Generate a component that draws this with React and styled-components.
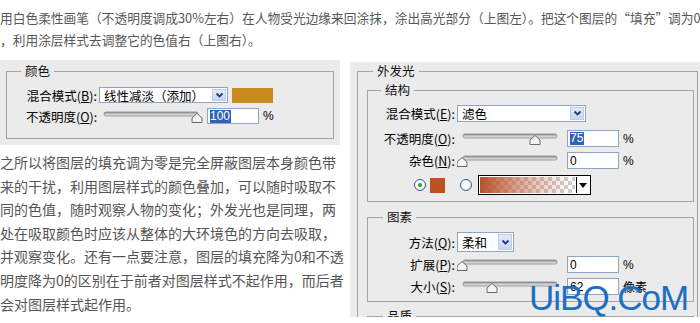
import React from "react";
import styled, { createGlobalStyle } from "styled-components";

const CJK = `"Noto Sans CJK SC", "Noto Sans", sans-serif`;
const LATIN = `"Liberation Sans", "Noto Sans CJK SC", sans-serif`;

const GlobalStyle = createGlobalStyle`
  html, body { margin: 0; padding: 0; background: #fff; }
  body { font-family: ${CJK}; }
`;

const Page = styled.div`
  position: relative;
  width: 700px;
  height: 323px;
  overflow: hidden;
  background: #fff;
  font-family: ${CJK};
`;

const Intro = styled.div`
  padding-top: 7px;
  font-size: 12.72px;
  line-height: 22px;
  color: #575757;
  white-space: nowrap;
`;

const Columns = styled.div`
  display: flex;
  align-items: flex-start;
  margin-top: 9px;
`;

const LeftCol = styled.div`
  width: 340px;
  flex: none;
`;

const RightCol = styled.div`
  width: 350px;
  flex: none;
  margin-left: 10px;
  margin-top: 2px;
`;

const Panel = styled.div`
  background: #ebebeb;
  box-sizing: border-box;
  padding: ${(p) => p.$pad};
  height: ${(p) => (p.$h ? `${p.$h}px` : "auto")};
  overflow: hidden;
`;

const Group = styled.fieldset`
  margin: ${(p) => p.$m || 0};
  padding: ${(p) => p.$pad || 0};
  border: 1px solid #a3a3a3;
  min-width: 0;
`;

const Legend = styled.legend`
  margin-left: ${(p) => p.$ml ?? 14}px;
  padding: 0 4px;
  font-size: 12.5px;
  line-height: 14px;
  color: #111;
`;

const Rows = styled.div`
  display: flex;
  flex-direction: column;
  padding-left: ${(p) => p.$pl || 0}px;
`;

const Row = styled.div`
  display: flex;
  align-items: center;
  height: ${(p) => p.$h}px;
  margin-top: ${(p) => p.$mt || 0}px;
  padding-left: ${(p) => p.$pl || 0}px;
`;

const Label = styled.span`
  width: ${(p) => p.$w}px;
  flex: none;
  text-align: right;
  margin-right: 2px;
  font-size: 12.5px;
  color: #000;
  white-space: nowrap;
`;

const Select = styled.div`
  display: flex;
  align-items: center;
  justify-content: space-between;
  box-sizing: border-box;
  width: ${(p) => p.$w}px;
  height: ${(p) => p.$h}px;
  padding: 0 1px 0 4px;
  border: 1px solid #8fa6c2;
  background: #fff;
  font-size: 12.5px;
  color: #000;
  white-space: nowrap;
  flex: none;
`;

const DropBtn = styled.span`
  display: flex;
  align-items: center;
  justify-content: center;
  width: 14px;
  height: ${(p) => p.$h}px;
  box-sizing: border-box;
  border: 1px solid #bccde9;
  background: linear-gradient(#e3ebf8, #c6d7f1);
  flex: none;
`;

const Swatch = styled.span`
  display: block;
  width: ${(p) => p.$w}px;
  height: ${(p) => p.$h}px;
  margin-left: ${(p) => p.$ml}px;
  background: ${(p) => p.$c};
  flex: none;
`;

const NumBox = styled.div`
  display: flex;
  align-items: center;
  box-sizing: border-box;
  width: 52px;
  height: ${(p) => p.$h || 17}px;
  margin-left: ${(p) => p.$ml || 0}px;
  padding-left: 2px;
  border: 1px solid #8fa6c2;
  background: #fff;
  font-family: ${LATIN};
  font-size: 12px;
  color: #000;
  flex: none;
`;

const Picked = styled.span`
  background: #2f63b8;
  color: #fff;
  line-height: 13px;
  padding: 0 1px 0 0;
`;

const Unit = styled.span`
  margin-left: 4px;
  font-size: 12px;
  color: #000;
  font-family: ${(p) => (p.$cjk ? CJK : LATIN)};
`;

const SliderSvg = styled.svg`
  display: block;
  flex: none;
`;

const Radio = styled.span`
  display: flex;
  align-items: center;
  justify-content: center;
  box-sizing: border-box;
  width: 12px;
  height: 12px;
  margin-left: ${(p) => p.$ml || 0}px;
  border-radius: 50%;
  border: 1px solid #2c5a8a;
  background: radial-gradient(circle at 40% 40%, #ffffff 40%, #dcdfe3);
  flex: none;
  &::after {
    content: "";
    width: 4px;
    height: 4px;
    border-radius: 50%;
    background: ${(p) => (p.$on ? "#2aa02a" : "transparent")};
  }
`;

const GradBox = styled.div`
  display: flex;
  box-sizing: border-box;
  width: 113px;
  height: 20px;
  margin-left: 6px;
  padding: 1px;
  border: 1px solid #000;
  background: #fff;
  flex: none;
`;

const GradFill = styled.div`
  flex: 1;
  background: linear-gradient(to right, #b9502a 0%, rgba(200, 110, 80, 0.55) 45%, rgba(230, 190, 180, 0) 95%),
    repeating-conic-gradient(#cdcdcd 0 25%, #ffffff 0 50%) 0 0 / 8px 8px;
`;

const GradArrow = styled.div`
  display: flex;
  align-items: center;
  justify-content: center;
  width: 12px;
  margin-left: 1px;
  border-left: 1px solid #000;
  background: #fff;
  &::before {
    content: "";
    border-left: 4px solid transparent;
    border-right: 4px solid transparent;
    border-top: 5px solid #000;
  }
`;

const Body = styled.p`
  margin: 6px 0 0;
  width: 346px;
  font-size: 14px;
  line-height: 23.6px;
  color: #555;
`;

const Watermark = styled.div`
  position: absolute;
  left: 529px;
  top: 280px;
  font-family: "Liberation Sans", Arial, sans-serif;
  font-size: 35px;
  line-height: 1;
  letter-spacing: -1px;
  color: #1b6fc4;
  white-space: nowrap;
`;

function Chevron() {
  return (
    <svg width="9" height="7" viewBox="0 0 9 7">
      <polyline points="1.5,1.5 4.5,4.5 7.5,1.5" fill="none" stroke="#1f3f78" strokeWidth="1.8" />
    </svg>
  );
}

function Slider({ width = 106, start = 6, end, thumb }) {
  const e = end ?? width - 6;
  return (
    <SliderSvg width={width} height={17} viewBox={`0 0 ${width} 17`}>
      <defs>
        <linearGradient id="trk" x1="0" y1="0" x2="0" y2="1">
          <stop offset="0" stopColor="#8c8c8c" />
          <stop offset="0.5" stopColor="#c9c9c9" />
          <stop offset="1" stopColor="#e6e6e6" />
        </linearGradient>
      </defs>
      <rect x={start} y={4} width={e - start} height={4} rx={2} fill="url(#trk)" stroke="#7d7d7d" strokeWidth="0.7" />
      <path
        d={`M${thumb - 5} 14.5 V10 L${thumb} 5.5 L${thumb + 5} 10 V14.5 Z`}
        fill="#f4f4f4"
        stroke="#6a6a6a"
        strokeWidth="1"
      />
    </SliderSvg>
  );
}

function SelectBox({ w, h, text }) {
  return (
    <Select $w={w} $h={h}>
      <span>{text}</span>
      <DropBtn $h={h - 4}>
        <Chevron />
      </DropBtn>
    </Select>
  );
}

export default function App() {
  return (
    <Page>
      <GlobalStyle />
      <Intro>
        <div>用白色柔性画笔（不透明度调成30%左右）在人物受光边缘来回涂抹，涂出高光部分（上图左）。把这个图层的“填充”调为0</div>
        <div>，利用涂层样式去调整它的色值右（上图右）。</div>
      </Intro>
      <Columns>
        <LeftCol>
          <Panel $pad="4px 6px 6px 6px">
            <Group $pad="9px 0 14px">
              <Legend $ml={14}>颜色</Legend>
              <Rows $pl={19}>
                <Row $h={16}>
                  <Label $w={71}>
                    混合模式(<u>B</u>):
                  </Label>
                  <SelectBox w={129} h={16} text="线性减淡（添加）" />
                  <Swatch $w={41} $h={15} $ml={4} $c="#c98a1f" />
                </Row>
                <Row $h={16} $mt={5}>
                  <Label $w={71}>
                    不透明度(<u>O</u>):
                  </Label>
                  <Slider width={106} start={5} end={99} thumb={98} />
                  <NumBox $h={16} $ml={2}>
                    <Picked>100</Picked>
                  </NumBox>
                  <Unit>%</Unit>
                </Row>
              </Rows>
            </Group>
          </Panel>
          <Body>
            之所以将图层的填充调为零是完全屏蔽图层本身颜色带来的干扰，利用图层样式的颜色叠加，可以随时吸取不同的色值，随时观察人物的变化；外发光也是同理，两处在吸取颜色时应该从整体的大环境色的方向去吸取，并观察变化。还有一点要注意，图层的填充降为0和不透明度降为0的区别在于前者对图层样式不起作用，而后者会对图层样式起作用。
          </Body>
        </LeftCol>
        <RightCol>
          <Panel $pad="2px 0 0 0" $h={255}>
            <Group $m="0 2px 0 7px" $pad="5px 0 0">
              <Legend $ml={15}>外发光</Legend>
              <Group $m="0 3px 0 9px" $pad="8px 0 6px">
                <Legend $ml={13}>结构</Legend>
                <Rows>
                  <Row $h={17}>
                    <Label $w={87}>
                      混合模式(<u>E</u>):
                    </Label>
                    <SelectBox w={129} h={17} text="滤色" />
                  </Row>
                  <Row $h={17} $mt={8}>
                    <Label $w={87}>
                      不透明度(<u>O</u>):
                    </Label>
                    <Slider thumb={78} />
                    <NumBox $ml={4}>
                      <Picked>75</Picked>
                    </NumBox>
                    <Unit>%</Unit>
                  </Row>
                  <Row $h={17} $mt={5}>
                    <Label $w={87}>
                      杂色(<u>N</u>):
                    </Label>
                    <Slider thumb={5} />
                    <NumBox $ml={4}>0</NumBox>
                    <Unit>%</Unit>
                  </Row>
                  <Row $h={20} $mt={6} $pl={46}>
                    <Radio $on />
                    <Swatch $w={15} $h={15} $ml={4} $c="#bf501f" />
                    <Radio $ml={15} />
                    <GradBox>
                      <GradFill />
                      <GradArrow />
                    </GradBox>
                  </Row>
                </Rows>
              </Group>
              <Group $m="8px 3px 0 9px" $pad="8px 0 6px">
                <Legend $ml={15}>图素</Legend>
                <Rows>
                  <Row $h={20}>
                    <Label $w={87}>
                      方法(<u>Q</u>):
                    </Label>
                    <SelectBox w={57} h={20} text="柔和" />
                  </Row>
                  <Row $h={17} $mt={4}>
                    <Label $w={87}>
                      扩展(<u>P</u>):
                    </Label>
                    <Slider thumb={5} />
                    <NumBox $ml={4}>0</NumBox>
                    <Unit>%</Unit>
                  </Row>
                  <Row $h={17} $mt={5}>
                    <Label $w={87}>
                      大小(<u>S</u>):
                    </Label>
                    <Slider thumb={35} />
                    <NumBox $ml={4}>62</NumBox>
                    <Unit $cjk>像素</Unit>
                  </Row>
                </Rows>
              </Group>
              <Group $m="7px 3px 0 9px" $pad="8px 0 6px">
                <Legend $ml={15}>品质</Legend>
                <Rows>
                  <Row $h={20} />
                </Rows>
              </Group>
            </Group>
          </Panel>
        </RightCol>
      </Columns>
      <Watermark>UiBQ.CoM</Watermark>
    </Page>
  );
}
